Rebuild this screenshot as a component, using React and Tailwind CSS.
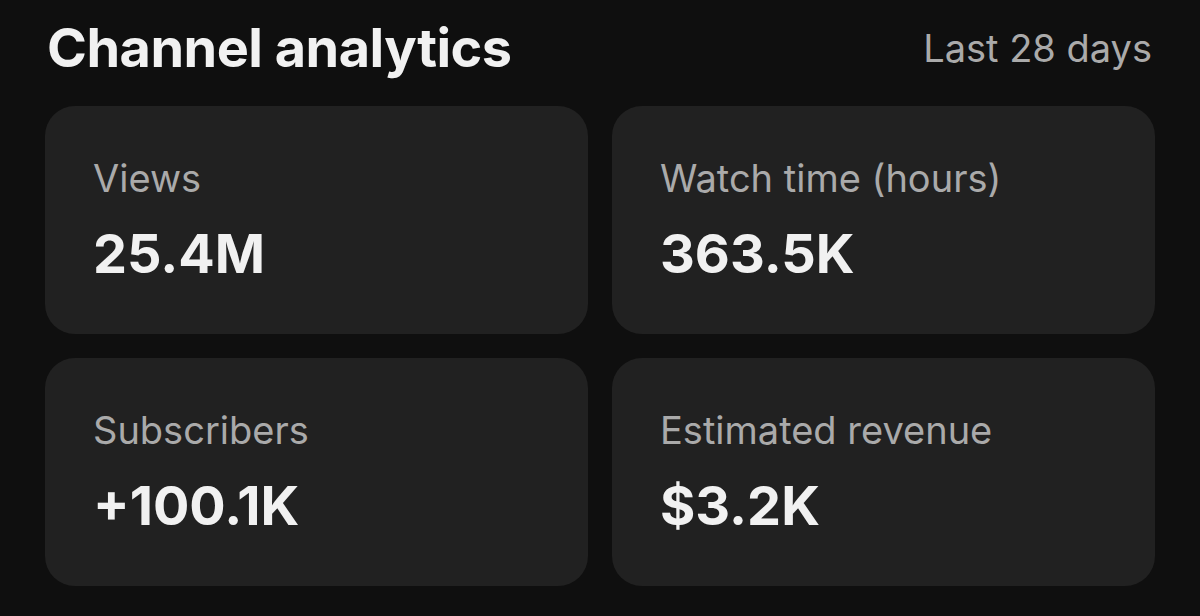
const stats = [
  { label: 'Views', value: '25.4M' },
  { label: 'Watch time (hours)', value: '363.5K' },
  { label: 'Subscribers', value: '+100.1K' },
  { label: 'Estimated revenue', value: '$3.2K' },
];

function StatCard({ label, value }) {
  return (
    <div className="h-[228px] rounded-[30px] bg-[#212121] pl-[48px] pt-[50px]">
      <div className="text-[38px] leading-[44px] text-[#aaaaaa]">{label}</div>
      <div className="mt-[24px] text-[54px] font-bold leading-[60px] text-[#f1f1f1]">{value}</div>
    </div>
  );
}

export default function App() {
  return (
    <div className="min-h-screen bg-[#0f0f0f] px-[45px] pt-[20px] font-['Inter',sans-serif]">
      <div className="flex items-center justify-between">
        <h1 className="pl-[2px] text-[54px] font-bold leading-[56px] tracking-[-0.5px] text-[#f1f1f1]">Channel analytics</h1>
        <span className="pr-[3px] text-[38px] leading-[56px] text-[#aaaaaa]">Last 28 days</span>
      </div>
      <div className="mt-[30px] grid grid-cols-2 gap-[24px]">
        {stats.map(s => (
          <StatCard key={s.label} label={s.label} value={s.value} />
        ))}
      </div>
    </div>
  );
}
